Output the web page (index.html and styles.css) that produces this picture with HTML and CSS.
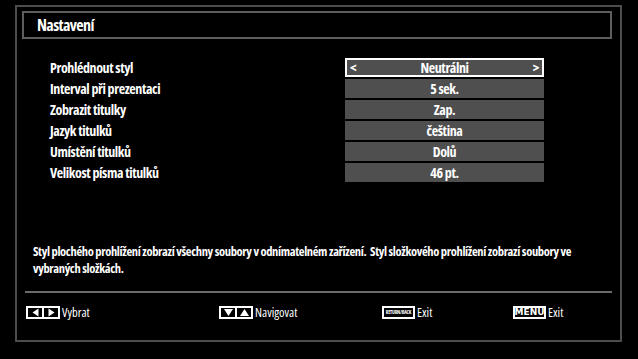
FILE: index.html
```html
<!DOCTYPE html>
<html lang="cs">
<head>
<meta charset="utf-8">
<link rel="stylesheet" href="styles.css">
</head>
<body>
<div class="frame">
  <div class="titlebar">Nastavení</div>
  <div class="settings">
    <div class="label">Prohlédnout styl</div>
    <div class="value selected"><span class="arrow">&lt;</span><span>Neutrálni</span><span class="arrow">&gt;</span></div>
    <div class="label">Interval při prezentaci</div>
    <div class="value">5 sek.</div>
    <div class="label">Zobrazit titulky</div>
    <div class="value">Zap.</div>
    <div class="label">Jazyk titulků</div>
    <div class="value">čeština</div>
    <div class="label">Umístění titulků</div>
    <div class="value">Dolů</div>
    <div class="label">Velikost písma titulků</div>
    <div class="value">46 pt.</div>
  </div>
  <p class="desc">Styl plochého prohlížení zobrazí všechny soubory v odnímatelném zařízení.&nbsp; Styl složkového prohlížení zobrazí soubory ve<br>vybraných složkách.</p>
  <div class="footer">
    <div class="hint">
      <span class="key pair"><span class="cell"><svg width="9" height="9" viewBox="0 0 9 9"><path d="M7.5 0.5V8.5L1.5 4.5Z" fill="#fff"/></svg></span><span class="cell"><svg width="9" height="9" viewBox="0 0 9 9"><path d="M1.5 0.5V8.5L7.5 4.5Z" fill="#fff"/></svg></span></span>
      <span>Vybrat</span>
    </div>
    <div class="hint">
      <span class="key pair"><span class="cell"><svg width="11" height="9" viewBox="0 0 11 9"><path d="M1 1H10L5.5 8Z" fill="#fff"/></svg></span><span class="cell"><svg width="11" height="9" viewBox="0 0 11 9"><path d="M1 8H10L5.5 1Z" fill="#fff"/></svg></span></span>
      <span>Navigovat</span>
    </div>
    <div class="hint">
      <span class="key back">RETURN/BACK</span>
      <span>Exit</span>
    </div>
    <div class="hint">
      <span class="key menu">MENU</span>
      <span>Exit</span>
    </div>
  </div>
</div>
</body>
</html>
```

FILE: styles.css
```css
html, body {
  margin: 0;
  padding: 0;
  background: #000;
}
body {
  width: 638px;
  height: 359px;
  overflow: hidden;
  color: #fff;
  font-family: "Open Sans", "DejaVu Sans Condensed", sans-serif;
  font-stretch: 75%;
  font-weight: bold;
}
.frame {
  box-sizing: border-box;
  margin: 5px 0 0 15px;
  width: 607px;
  height: 337px;
  border: 2px solid #4d4d4d;
  padding: 4px 8px 0 5px;
}
.titlebar {
  box-sizing: border-box;
  height: 28px;
  border: 2px solid #5e5e5e;
  padding-left: 13px;
  font-size: 16px;
  letter-spacing: -0.6px;
  line-height: 24px;
}
.settings {
  display: grid;
  grid-template-columns: 295px 199px;
  grid-auto-rows: 19px;
  row-gap: 2px;
  margin: 19px 0 0 28px;
  font-size: 14px;
  letter-spacing: -0.4px;
}
.label {
  line-height: 19px;
}
.value {
  box-sizing: border-box;
  background: #4f4f4f;
  text-align: center;
  line-height: 19px;
}
.value.selected {
  border: 2px solid #fff;
  line-height: 15px;
  display: flex;
  justify-content: space-between;
  padding: 0 3px;
}
.arrow {
  font-size: 14px;
}
.desc {
  margin: 61px 0 0 11px;
  font-size: 12.5px;
  letter-spacing: -0.35px;
  line-height: 17px;
  white-space: nowrap;
}
.footer {
  margin: 14px 0 0 3px;
  border-top: 2px solid #6a6a6a;
  display: grid;
  grid-template-columns: 193px 163px 131px 1fr;
  padding: 12px 0 0 1px;
  font-size: 12.5px;
  font-weight: normal;
}
.hint {
  display: flex;
  align-items: center;
  gap: 2px;
  height: 14px;
}
.key {
  box-sizing: border-box;
  height: 13px;
  border: 2px solid #fff;
  display: flex;
  align-items: center;
  justify-content: center;
  background: #000;
}
.pair {
  width: 34px;
  background: #fff;
  gap: 2px;
}
.cell {
  flex: 1;
  height: 9px;
  background: #000;
  display: flex;
  align-items: center;
  justify-content: center;
}
.back {
  width: 33px;
  font-size: 5px;
  font-weight: bold;
  letter-spacing: -0.2px;
  overflow: hidden;
}
.menu {
  width: 33px;
  font-family: "DejaVu Sans", sans-serif;
  font-stretch: normal;
  font-size: 9px;
  font-weight: bold;
}
```
